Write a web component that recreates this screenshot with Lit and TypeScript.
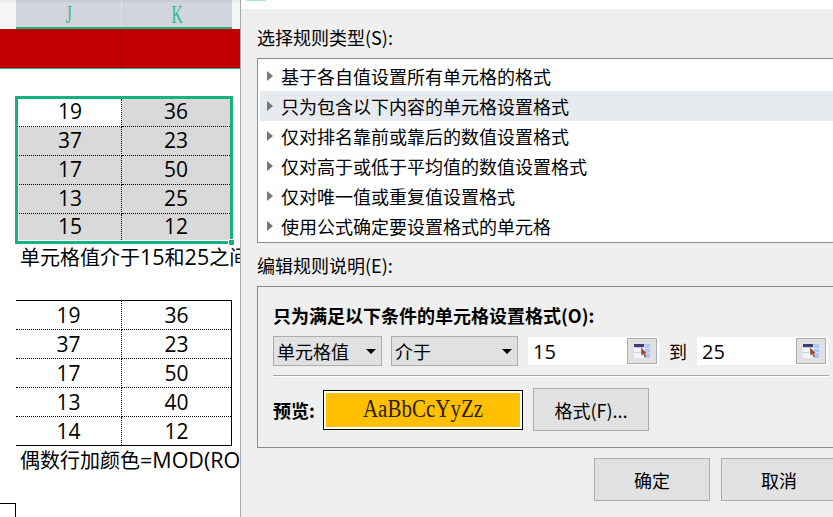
import { LitElement, html, css } from "lit";
import { customElement } from "lit/decorators.js";

const RULES = [
  "基于各自值设置所有单元格的格式",
  "只为包含以下内容的单元格设置格式",
  "仅对排名靠前或靠后的数值设置格式",
  "仅对高于或低于平均值的数值设置格式",
  "仅对唯一值或重复值设置格式",
  "使用公式确定要设置格式的单元格",
];
const T1 = [[19, 36], [37, 23], [17, 50], [13, 25], [15, 12]];
const T2 = [[19, 36], [37, 23], [17, 50], [13, 40], [14, 12]];

const pickIcon = html`<svg class="pick" width="16" height="14" viewBox="0 0 16 14">
  <rect x="0" y="0" width="16" height="14" fill="#f2f5fb"/>
  <rect x="0" y="0" width="10" height="3" fill="#3a3f78"/>
  <rect x="0" y="3" width="10" height="1" fill="#c9cbdc"/>
  <rect x="10" y="0" width="6" height="14" fill="#a9c8f5"/>
  <rect x="0" y="8" width="10" height="1" fill="#c4d6f2"/>
  <rect x="10" y="4" width="6" height="1" fill="#dbe7fa"/>
  <rect x="10" y="8" width="6" height="1" fill="#dbe7fa"/>
  <rect x="10" y="1" width="1" height="13" fill="#dbe7fa"/>
  <path d="M7 3.5 L12.6 9 L10.6 9.3 L12 12.6 L10.6 13.2 L9.3 10 L7.4 11.4 Z" fill="#a5422c"/>
</svg>`;

@customElement("app-root")
export class AppRoot extends LitElement {
  static styles = css`
    :host {
      display: flex;
      width: 833px;
      height: 517px;
      overflow: hidden;
      background: #fff;
      color: #000;
      font-family: "Noto Sans CJK SC", "Noto Sans", sans-serif;
    }
    .sheet {
      flex: 0 0 240px;
      width: 240px;
      display: flex;
      flex-direction: column;
      border-right: 1px solid #a6a6a6;
      font-family: "Open Sans", "Noto Sans CJK SC", sans-serif;
      font-size: 20px;
      overflow: hidden;
      white-space: nowrap;
    }
    .lat { font-size: 21.5px; }
    .heads {
      height: 27px;
      padding-left: 16px;
      display: flex;
      background: linear-gradient(#e6e7ea, #f5f6f8 4px);
    }
    .head {
      background: linear-gradient(#c6cad3, #d1d5dd 4px);
      color: #2dbd8a;
      font-family: "Liberation Serif", serif;
      font-size: 20px;
      line-height: 27px;
      display: flex;
      align-items: center;
      justify-content: center;
    }
    .head span {
      display: block;
      transform: translateY(1px) scale(0.78, 1.25);
    }
    .head.j { width: 105px; border-right: 1px solid #dde0e6; }
    .head.k { width: 110px; }
    .heads-line {
      height: 2px;
      margin-left: 16px;
      width: 216px;
      background: #17b17e;
    }
    .band {
      height: 39px;
      background: #c00000;
      border-bottom: 1px solid #17b17e;
      display: flex;
    }
    .band i { width: 121px; border-right: 1px solid #300; }
    .t1 {
      position: relative;
      box-sizing: border-box;
      margin: 27px 0 0 15px;
      width: 218px;
      height: 148px;
      border: 3px solid #17b17e;
    }
    .t1 .grid {
      box-sizing: border-box;
      height: 142px;
      padding: 0 1px 1px 1px;
      display: grid;
      grid-template-columns: 103px 108px;
      grid-template-rows: 28px 29px 29px 29px 26px;
    }
    .cell {
      display: flex;
      align-items: center;
      justify-content: center;
      line-height: 1;
      font-size: 21px;
      box-sizing: border-box;
      border-bottom: 1px dotted #000;
    }
    .cell.l { border-right: 1px dotted #000; }
    .cell.last { border-bottom: none; }
    .t1 .cell { background: #d9d9d9; padding-bottom: 2px; }
    .t1 .cell.blank { background: #fff; }
    .handle {
      position: absolute;
      right: -4px;
      bottom: -4px;
      width: 5px;
      height: 5px;
      background: #17b17e;
      border-left: 1px solid #fff;
      border-top: 1px solid #fff;
    }
    .note {
      padding-left: 20px;
      line-height: 26px;
      height: 26px;
    }
    .t2 {
      box-sizing: border-box;
      margin: 30px 0 0 16px;
      width: 216px;
      height: 146px;
      border-top: 1px solid #000;
      border-bottom: 1px solid #000;
      border-right: 1px solid #000;
      display: grid;
      grid-template-columns: 106px 109px;
      grid-template-rows: repeat(4, 29px) 28px;
    }
    .note2 {
      padding-left: 20px;
      height: 28px;
      line-height: 28px;
    }
    .corner {
      margin-top: 29px;
      width: 16px;
      height: 14px;
      box-sizing: border-box;
      border-top: 1px solid #000;
      border-right: 1px solid #000;
    }
    .dialog {
      flex: 0 0 592px;
      background: #efefef;
      font-size: 18px;
      white-space: nowrap;
      overflow: hidden;
    }
    .strip {
      height: 9px;
      background: #fff;
    }
    .strip i {
      display: block;
      margin-left: 5px;
      width: 20px;
      height: 1px;
      background: #a5e3cd;
    }
    .body { padding: 16px 0 0 16px; }
    .label { height: 24px; line-height: 24px; }
    .list {
      box-sizing: border-box;
      margin-top: 9px;
      width: 600px;
      height: 185px;
      border: 1px solid #8a8a98;
      padding: 2px 2px;
      background: #fff;
    }
    .rule {
      height: 30px;
      line-height: 30px;
      display: flex;
      align-items: center;
    }
    .rule.sel { background: #e7eaee; }
    .rule b {
      margin: 0 8px 0 7px;
      width: 0;
      height: 0;
      border-left: 6px solid #777;
      border-top: 5px solid transparent;
      border-bottom: 5px solid transparent;
    }
    .label.second { margin-top: 10px; }
    .group {
      box-sizing: border-box;
      margin-top: 9px;
      width: 600px;
      height: 162px;
      border: 1px solid #8a8a8a;
      padding: 16px 0 0 15px;
    }
    .title { height: 24px; line-height: 24px; font-weight: 700; }
    .cond {
      margin-top: 9px;
      height: 30px;
      display: flex;
      align-items: center;
    }
    .select {
      box-sizing: border-box;
      height: 30px;
      border: 1px solid #adadad;
      background: #e1e1e1;
      padding: 0 5px 0 3px;
      display: flex;
      align-items: center;
      justify-content: space-between;
      margin-right: 9px;
    }
    .select.a { width: 109px; }
    .select.b { width: 127px; margin-right: 10px; }
    .select b {
      width: 0;
      height: 0;
      border-top: 5px solid #000;
      border-left: 5px solid transparent;
      border-right: 5px solid transparent;
    }
    .input {
      box-sizing: border-box;
      width: 131px;
      height: 28px;
      background: #fff;
      padding: 0 2px 0 5px;
      display: flex;
      align-items: center;
      justify-content: space-between;
      font-family: "Open Sans", sans-serif;
      font-size: 20px;
    }
    .pickbtn {
      box-sizing: border-box;
      width: 30px;
      height: 26px;
      border: 1px solid #adadad;
      background: #e1e1e1;
      display: flex;
      align-items: center;
      justify-content: center;
    }
    .to { width: 38px; text-align: center; }
    .rule-line {
      margin-top: 9px;
      width: 556px;
      height: 1px;
      background: #a6a6a6;
      border-bottom: 1px solid #fff;
    }
    .preview {
      margin-top: 11px;
      height: 43px;
      display: flex;
      align-items: center;
    }
    .preview strong { width: 50px; font-weight: 700; }
    .swatch {
      box-sizing: border-box;
      width: 200px;
      height: 40px;
      border: 1px solid #000;
      outline: 2px solid #fff;
      outline-offset: -3px;
      background: #ffc000;
      display: flex;
      align-items: center;
      justify-content: center;
      font-family: "Liberation Serif", serif;
      font-size: 21px;
      color: #2a2000;
      margin-right: 10px;
    }
    .swatch span {
      display: block;
      transform: scaleY(1.15);
    }
    .btn {
      box-sizing: border-box;
      flex: 0 0 116px;
      width: 116px;
      height: 43px;
      border: 1px solid #adadad;
      background: #e1e1e1;
      display: flex;
      align-items: center;
      justify-content: center;
    }
    .foot {
      margin-top: 10px;
      padding-left: 337px;
      display: flex;
      gap: 11px;
    }
  `;

  private cells(rows: number[][], t1: boolean) {
    return rows.flatMap((r, i) =>
      r.map((v, j) => {
        const cls = [
          "cell",
          j === 0 ? "l" : "",
          i === rows.length - 1 ? "last" : "",
          t1 && i === 0 && j === 0 ? "blank" : "",
        ].join(" ");
        return html`<div class=${cls}>${v}</div>`;
      })
    );
  }

  render() {
    return html`
      <section class="sheet">
        <div class="heads">
          <div class="head j"><span>J</span></div>
          <div class="head k"><span>K</span></div>
        </div>
        <div class="heads-line"></div>
        <div class="band"><i></i></div>
        <div class="t1">
          <div class="grid">${this.cells(T1, true)}</div>
          <div class="handle"></div>
        </div>
        <div class="note">单元格值介于<span class="lat">15</span>和<span class="lat">25</span>之间</div>
        <div class="t2">${this.cells(T2, false)}</div>
        <div class="note2">偶数行加颜色<span class="lat">=MOD(ROW(),2)=0</span></div>
        <div class="corner"></div>
      </section>
      <section class="dialog">
        <div class="strip"><i></i></div>
        <div class="body">
          <div class="label">选择规则类型(S):</div>
          <div class="list">
            ${RULES.map(
              (r, i) =>
                html`<div class="rule ${i === 1 ? "sel" : ""}"><b></b>${r}</div>`
            )}
          </div>
          <div class="label second">编辑规则说明(E):</div>
          <div class="group">
            <div class="title">只为满足以下条件的单元格设置格式(O):</div>
            <div class="cond">
              <div class="select a">单元格值<b></b></div>
              <div class="select b">介于<b></b></div>
              <div class="input">15<span class="pickbtn">${pickIcon}</span></div>
              <div class="to">到</div>
              <div class="input">25<span class="pickbtn">${pickIcon}</span></div>
            </div>
            <div class="rule-line"></div>
            <div class="preview">
              <strong>预览:</strong>
              <div class="swatch"><span>AaBbCcYyZz</span></div>
              <div class="btn">格式(F)...</div>
            </div>
          </div>
          <div class="foot">
            <div class="btn">确定</div>
            <div class="btn">取消</div>
          </div>
        </div>
      </section>
    `;
  }
}
